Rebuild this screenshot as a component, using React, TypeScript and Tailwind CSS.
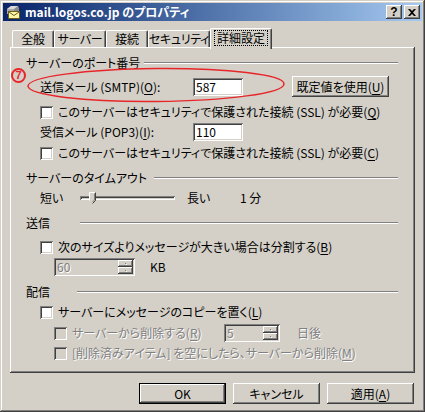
import React from "react";

const raised =
  "shadow-[inset_-1px_-1px_#404040,inset_1px_1px_#ffffff,inset_-2px_-2px_#808080]";
const sunken =
  "shadow-[inset_1px_1px_#808080,inset_-1px_-1px_#ffffff,inset_2px_2px_#404040,inset_-2px_-2px_#d4d0c8]";
const dim = "text-[#808080] [text-shadow:1px_1px_0_#ffffff]";

function Check({ disabled }: { disabled?: boolean }) {
  return (
    <span
      className={`block w-[13px] h-[13px] shrink-0 ${disabled ? "bg-[#d4d0c8]" : "bg-white"} ${sunken}`}
    />
  );
}

function CheckRow({
  children,
  disabled,
  className = "",
}: {
  children: React.ReactNode;
  disabled?: boolean;
  className?: string;
}) {
  return (
    <div className={`flex items-center h-[16px] ${className}`}>
      <Check disabled={disabled} />
      <span className={`ml-[5px] whitespace-nowrap ${disabled ? dim : ""}`}>{children}</span>
    </div>
  );
}

function Heading({ label, w, className = "" }: { label: string; w: string; className?: string }) {
  return (
    <div className={`flex items-center h-[16px] ${className}`}>
      <span className={`${w} shrink-0 whitespace-nowrap`}>{label}</span>
      <span className="flex-1 h-[2px] border-t border-t-[#808080] border-b border-b-white" />
    </div>
  );
}

function Mn({ c }: { c: string }) {
  return <span className="underline underline-offset-[2px]">{c}</span>;
}

function Spin({ value, w }: { value: string; w: string }) {
  return (
    <div className={`flex ${w} h-[18px] p-[2px] bg-[#d4d0c8] ${sunken}`}>
      <span className={`flex-1 pl-[1px] leading-[14px] ${dim}`}>{value}</span>
      <div className="flex flex-col w-[15px]">
        {[0, 1].map((i) => (
          <span key={i} className={`h-[7px] flex items-center justify-center ${raised}`}>
            <span className="block w-[1px] h-[1px] bg-[#808080] shadow-[1px_1px_#ffffff]" />
          </span>
        ))}
      </div>
    </div>
  );
}

function Btn({ children, def, w }: { children: React.ReactNode; def?: boolean; w: string }) {
  return (
    <div className={`${w} h-[21px] ${def ? "border border-black" : ""}`}>
      <div className={`w-full h-full flex items-center justify-center whitespace-nowrap ${raised}`}>{children}</div>
    </div>
  );
}

function Tab({ label, w, active }: { label: string; w: string; active?: boolean }) {
  if (active) {
    return (
      <div
        className={`${w} h-[21px] -mb-[2px] relative z-10 bg-[#d4d0c8] rounded-t-[2px] border-l border-t border-white border-r border-r-[#404040] shadow-[inset_-1px_0_#808080] flex items-start justify-center pt-[2px] whitespace-nowrap`}
      >
        <span className="px-[2px] outline-1 outline-dotted outline-black leading-[14px]">{label}</span>
      </div>
    );
  }
  return (
    <div
      className={`${w} h-[17px] rounded-t-[2px] border-l border-t border-white border-r border-r-[#404040] shadow-[inset_-1px_0_#808080] flex items-center justify-center whitespace-nowrap tracking-[-0.3px]`}
    >
      {label}
    </div>
  );
}

export default function App() {
  return (
    <div
      className="relative w-[425px] h-[412px] bg-[#d4d0c8] p-[3px] flex flex-col text-[12px] leading-[14px] text-black font-['Noto_Sans_CJK_JP',sans-serif] [font-feature-settings:'palt'] shadow-[inset_-1px_-1px_#404040,inset_1px_1px_#d4d0c8,inset_-2px_-2px_#808080,inset_2px_2px_#ffffff]"
    >
      {/* title bar */}
      <div className="h-[18px] flex items-center bg-linear-to-r from-[#0a246a] to-[#a6caf0] pl-[2px] pr-[2px]">
        <svg width="16" height="16" viewBox="0 0 16 16" className="shrink-0">
          <path d="M2 5 L6 2 L13 2 L14 4 L14 7 L10 10 L2 10 Z" fill="#8a8a8a" />
          <path d="M2 5 L6 2 L13 2 L9 5 Z" fill="#d8d8d8" />
          <path d="M2 5 L9 5 L9 10 L2 10 Z" fill="#a8a8a8" />
          <rect x="3.5" y="7.5" width="11" height="7" fill="#fff6a8" stroke="#6b5d1a" />
          <path d="M4 8 L9 11.5 L14 8" fill="none" stroke="#6b5d1a" />
        </svg>
        <span className="ml-[4px] text-white font-bold whitespace-nowrap">mail.logos.co.jp のプロパティ</span>
        <div className="ml-auto flex gap-[2px]">
          <div className={`w-[16px] h-[14px] bg-[#d4d0c8] flex items-center justify-center font-bold text-[12px] leading-none font-['Liberation_Sans',sans-serif] ${raised}`}>
            ?
          </div>
          <div className={`w-[16px] h-[14px] bg-[#d4d0c8] flex items-center justify-center ${raised}`}>
            <svg width="8" height="7" viewBox="0 0 8 7">
              <path d="M0 0 L2 0 L4 2 L6 0 L8 0 L5 3.5 L8 7 L6 7 L4 5 L2 7 L0 7 L3 3.5 Z" fill="#000" />
            </svg>
          </div>
        </div>
      </div>

      <div className="px-[7px] mt-[7px] flex flex-col">
        {/* tabs */}
        <div className="flex items-end pl-[2px]">
          <Tab label="全般" w="w-[42px]" />
          <Tab label="サーバー" w="w-[52px]" />
          <Tab label="接続" w="w-[42px]" />
          <Tab label="セキュリティ" w="w-[62px]" />
          <Tab label="詳細設定" w="w-[62px]" active />
        </div>

        {/* panel */}
        <div
          className={`h-[326px] flex flex-col pt-[8px] pl-[16px] pr-[17px] shadow-[inset_-1px_-1px_#404040,inset_1px_1px_#ffffff,inset_-2px_-2px_#808080]`}
        >
          <Heading label="サーバーのポート番号" w="w-[118px]" />

          <div className="flex items-center h-[19px] mt-[6px] pl-[14px]">
            <span className="w-[153px] whitespace-nowrap">
              送信メール (SMTP)(<Mn c="O" />):
            </span>
            <div className={`w-[50px] h-[18px] bg-white pl-[3px] flex items-center ${sunken}`}>587</div>
            <div className="ml-[49px]">
              <Btn w="w-[97px]">
                既定値を使用(<Mn c="U" />)
              </Btn>
            </div>
          </div>

          <CheckRow className="mt-[8px] ml-[14px]">
            このサーバーはセキュリティで保護された接続 (SSL) が必要(<Mn c="Q" />)
          </CheckRow>

          <div className="flex items-center h-[19px] mt-[2px] pl-[14px]">
            <span className="w-[153px] whitespace-nowrap">
              受信メール (POP3)(<Mn c="I" />):
            </span>
            <div className={`w-[50px] h-[18px] bg-white pl-[3px] flex items-center ${sunken}`}>110</div>
          </div>

          <CheckRow className="mt-[4px] ml-[14px]">
            このサーバーはセキュリティで保護された接続 (SSL) が必要(<Mn c="C" />)
          </CheckRow>

          <Heading label="サーバーのタイムアウト" w="w-[128px]" className="mt-[9px]" />

          <div className="flex items-center h-[16px] mt-[4px] pl-[14px]">
            <span className="w-[40px]">短い</span>
            <div className="relative w-[95px] h-[4px] shadow-[inset_1px_1px_#808080,inset_-1px_-1px_#ffffff,inset_2px_2px_#404040,inset_-2px_-2px_#d4d0c8]">
              <svg width="7" height="12" viewBox="0 0 7 12" className="absolute left-[9px] -top-[4px]">
                <path d="M0.5 0.5 L6.5 0.5 L6.5 8.5 L3.5 11.5 L0.5 8.5 Z" fill="#d4d0c8" />
                <path d="M0.5 8.5 L0.5 0.5 L6.5 0.5" fill="none" stroke="#ffffff" />
                <path d="M6.5 0.5 L6.5 8.5 L3.5 11.5" fill="none" stroke="#404040" />
                <path d="M5.5 1.5 L5.5 8 L3.5 10" fill="none" stroke="#808080" />
              </svg>
            </div>
            <span className="ml-[12px] w-[53px]">長い</span>
            <span>1 分</span>
          </div>

          <Heading label="送信" w="w-[54px]" className="mt-[9px]" />

          <CheckRow className="mt-[8px] ml-[14px]">
            次のサイズよりメッセージが大きい場合は分割する(<Mn c="B" />)
          </CheckRow>

          <div className="flex items-center h-[18px] mt-[3px] pl-[28px]">
            <Spin value="60" w="w-[81px]" />
            <span className="ml-[15px]">KB</span>
          </div>

          <Heading label="配信" w="w-[51px]" className="mt-[8px]" />

          <CheckRow className="mt-[4px] ml-[14px]">
            サーバーにメッセージのコピーを置く(<Mn c="L" />)
          </CheckRow>

          <div className="flex items-center h-[18px] mt-[4px] pl-[28px]">
            <div className="w-[170px]">
              <CheckRow disabled>
                サーバーから削除する(<Mn c="R" />)
              </CheckRow>
            </div>
            <Spin value="5" w="w-[56px]" />
            <span className={`ml-[17px] ${dim}`}>日後</span>
          </div>

          <CheckRow disabled className="mt-[3px] ml-[28px]">
            [削除済みアイテム] を空にしたら、サーバーから削除(<Mn c="M" />)
          </CheckRow>
        </div>

        {/* buttons */}
        <div className="flex justify-end gap-[7px] mt-[10px] pr-[1px]">
          <Btn w="w-[87px]" def>
            OK
          </Btn>
          <Btn w="w-[87px]">キャンセル</Btn>
          <Btn w="w-[87px]">
            適用(<Mn c="A" />)
          </Btn>
        </div>
      </div>

      {/* red annotation */}
      <svg width="262" height="38" viewBox="0 0 262 38" className="absolute left-[26px] top-[66px] pointer-events-none">
        <ellipse cx="130" cy="19" rx="128" ry="16.5" fill="none" stroke="#e8262a" strokeWidth="1.5" transform="rotate(-0.5 130 19)" />
      </svg>
      <span className="absolute left-[11px] top-[68px] w-[15px] h-[15px] rounded-full border-2 border-[#e8262a] text-[#e8262a] font-bold text-[11px] leading-none flex items-center justify-center font-['Liberation_Sans',sans-serif]">
        7
      </span>
    </div>
  );
}
